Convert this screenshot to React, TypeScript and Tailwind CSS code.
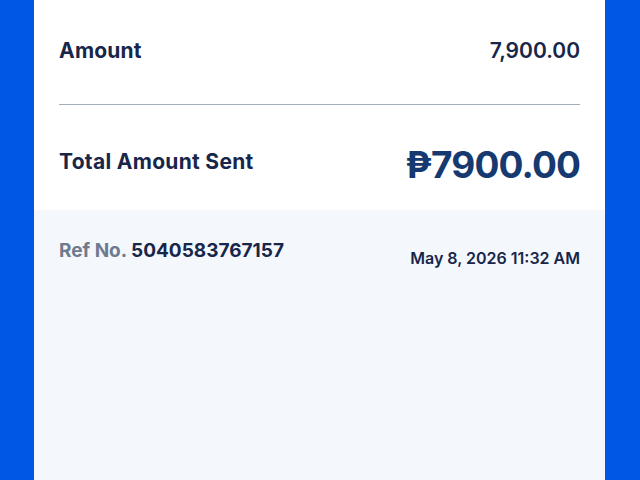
export default function App() {
  return (
    <div className="w-[640px] h-[480px] bg-[#0057e4] flex overflow-hidden" style={{ fontFamily: "Inter, 'Open Sans', sans-serif" }}>
      <div className="ml-[34px] w-[571px] h-full bg-white flex flex-col">
        <div className="px-[25px]">
          <div className="h-[105px] flex items-center justify-between border-b border-[#a3adbd] pb-[4px]">
            <span className="text-[21px] font-bold text-[#18264a] leading-none tracking-[0.2px]">Amount</span>
            <span className="text-[21px] font-semibold text-[#18264a] leading-none">7,900.00</span>
          </div>
          <div className="h-[105px] flex items-center justify-between pt-[8px]">
            <span className="text-[21px] font-bold text-[#18264a] leading-none tracking-[0.3px]">Total Amount Sent</span>
            <span className="text-[37px] font-bold text-[#163a70] leading-none tracking-[-0.9px] mt-[6px]">₱7900.00</span>
          </div>
        </div>
        <div className="flex-1 bg-[#f4f7fc] px-[25px] pt-[31px] flex justify-between items-start">
          <span className="text-[19px] font-bold text-[#18264a] leading-none">
            <span className="text-[#6e7a8e]">Ref No.</span> 5040583767157
          </span>
          <span className="text-[16px] font-semibold text-[#18264a] leading-none mt-[9px]">May 8, 2026 11:32 AM</span>
        </div>
      </div>
    </div>
  );
}
